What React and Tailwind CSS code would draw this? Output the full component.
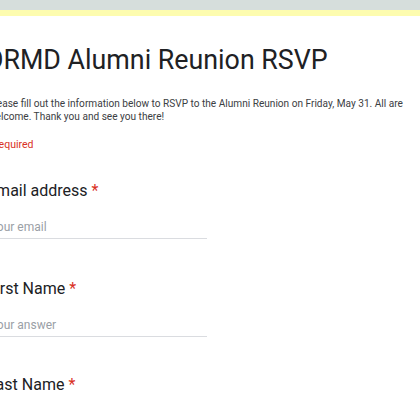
export default function App() {
  const font = { fontFamily: "Roboto, 'Liberation Sans', sans-serif" };
  return (
    <div className="w-[420px] h-[420px] overflow-hidden bg-white relative" style={font}>
      <div className="h-[10px] bg-[#d6dedc]" />
      <div className="h-[6px] bg-[#fdfcaf]" />
      <div className="ml-[-10px] w-[450px]">
        <h1 className="mt-[26px] ml-[-5px] text-[26.8px] leading-[36px] text-[#202124] font-normal whitespace-nowrap">
          ORMD Alumni Reunion RSVP
        </h1>
        <p className="mt-[20px] ml-[-2px] text-[10.1px] leading-[12.8px] text-[#3c4043] w-[428px]">
          Please fill out the information below to RSVP to the Alumni Reunion on Friday, May 31. All are welcome. Thank you and see you there!
        </p>
        <p className="mt-[14px] ml-[-5px] text-[10.5px] leading-[13px] text-[#d93025]">* Required</p>

        <div className="mt-[30px] ml-[-3px]">
          <div className="text-[16px] leading-[20px] text-[#202124]">
            Email address <span className="text-[#d93025]">*</span>
          </div>
          <div className="mt-[18px] ml-[3px] w-[217px] border-b border-[#dadce0] pb-[3px] text-[12px] leading-[16px] text-[#9aa0a6]">
            Your email
          </div>
        </div>

        <div className="mt-[40px] ml-[-3px]">
          <div className="text-[16px] leading-[20px] text-[#202124]">
            First Name <span className="text-[#d93025]">*</span>
          </div>
          <div className="mt-[18px] ml-[3px] w-[217px] border-b border-[#dadce0] pb-[3px] text-[12px] leading-[16px] text-[#9aa0a6]">
            Your answer
          </div>
        </div>

        <div className="mt-[38px] ml-[-3px]">
          <div className="text-[16px] leading-[20px] text-[#202124]">
            Last Name <span className="text-[#d93025]">*</span>
          </div>
        </div>
      </div>
    </div>
  );
}
